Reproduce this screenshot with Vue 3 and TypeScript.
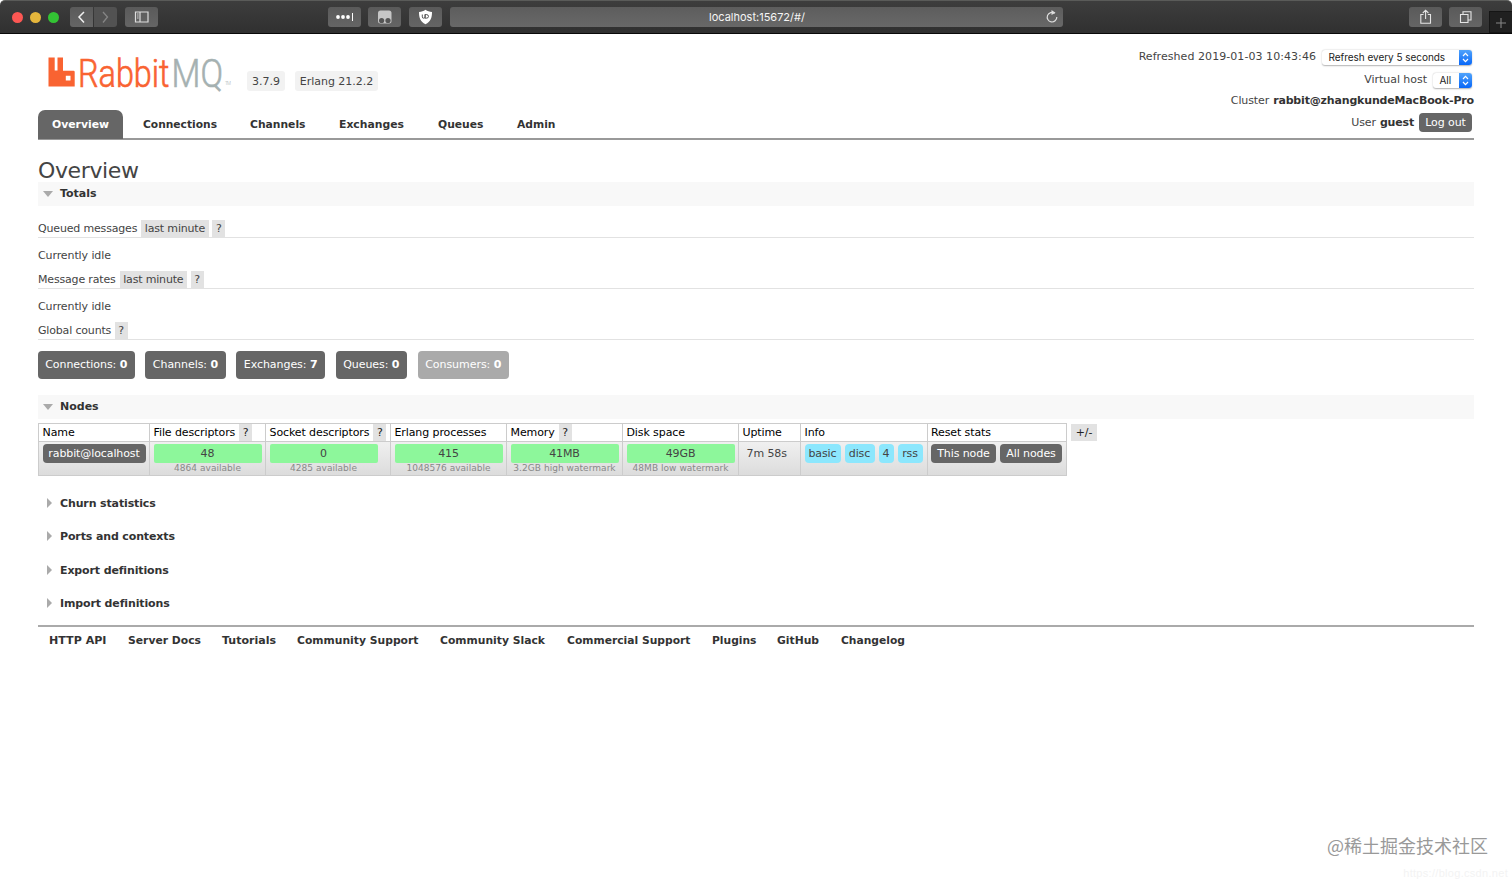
<script setup lang="ts">
interface Tab { label: string; width: number; active?: boolean }
interface Count { label: string; value: number; width: number; disabled?: boolean }
interface Stat { title: string; help?: boolean; value: string; note: string; bar: number }

const tabs: Tab[] = [
  { label: 'Overview', width: 57, active: true },
  { label: 'Connections', width: 74 },
  { label: 'Channels', width: 55.5 },
  { label: 'Exchanges', width: 65 },
  { label: 'Queues', width: 45.5 },
  { label: 'Admin', width: 38.5 },
]

const counts: Count[] = [
  { label: 'Connections', value: 0, width: 96.5 },
  { label: 'Channels', value: 0, width: 80.5 },
  { label: 'Exchanges', value: 7, width: 88.5 },
  { label: 'Queues', value: 0, width: 71.5 },
  { label: 'Consumers', value: 0, width: 91, disabled: true },
]

const stats: Stat[] = [
  { title: 'File descriptors', help: true, value: '48', note: '4864 available', bar: 108 },
  { title: 'Socket descriptors', help: true, value: '0', note: '4285 available', bar: 108 },
  { title: 'Erlang processes', value: '415', note: '1048576 available', bar: 108 },
  { title: 'Memory', help: true, value: '41MB', note: '3.2GB high watermark', bar: 108 },
  { title: 'Disk space', value: '49GB', note: '48MB low watermark', bar: 108 },
]

const columns: number[] = [111, 116, 125, 116, 116, 116, 62, 126.5, 139.5]
const sections: string[] = ['Churn statistics', 'Ports and contexts', 'Export definitions', 'Import definitions']
const links = [
  { label: 'HTTP API', width: 57.5 },
  { label: 'Server Docs', width: 73 },
  { label: 'Tutorials', width: 54 },
  { label: 'Community Support', width: 121.5 },
  { label: 'Community Slack', width: 105 },
  { label: 'Commercial Support', width: 123.5 },
  { label: 'Plugins', width: 44.5 },
  { label: 'GitHub', width: 42 },
  { label: 'Changelog', width: 64 },
]
</script>

<template>
  <div class="window">
    <div class="toolbar">
      <div class="lights"><i class="red"></i><i class="yellow"></i><i class="green"></i></div>
      <div class="history">
        <span class="tool back"><svg width="23" height="20" viewBox="0 0 23 20"><path d="M14 5 9 10l5 5.500" fill="none" stroke="#f0f0f0" stroke-width="1.500" /></svg></span>
        <span class="tool forward"><svg width="23" height="20" viewBox="0 0 23 20"><path d="m9 5 4.500 5L9 15.500" fill="none" stroke="#858585" stroke-width="1.300" /></svg></span>
      </div>
      <span class="tool sidebar"><svg width="33" height="20" viewBox="0 0 33 20"><g fill="none" stroke="#ddd" stroke-width="1.200"><path d="M10.500 5h12.500v10H10.500zM15 5v10" /><path d="M12 7h1.700M12 9h1.700M12 11h1.700" stroke-width=".9" /></g></svg></span>
      <span class="tool dots"><svg width="33" height="20" viewBox="0 0 33 20"><g fill="#fff"><circle cx="10" cy="10" r="1.900" /><circle cx="15" cy="10" r="1.900" /><circle cx="20" cy="10" r="1.900" /><path d="M24 6h1v8h-1z" /></g></svg></span>
      <span class="tool face"><svg width="33" height="20" viewBox="0 0 33 20"><rect x="10" y="3.500" width="13.500" height="13" rx="2.500" fill="#c6c6c6" /><circle cx="13.600" cy="13.500" r="2.600" fill="#555" /><circle cx="20" cy="13.500" r="2.600" fill="#555" /></svg></span>
      <span class="tool shield"><svg width="33" height="20" viewBox="0 0 33 20"><path d="M16.500 2.800c2 1.500 4 2 6.500 2.100 0 6-1.300 9.500-6.500 12.300C11.300 14.400 10 10.900 10 4.900c2.500-.1 4.500-.6 6.500-2.100z" fill="#fff" /><path d="M13.300 7.500v2.400q0 1.300 1.400 1.300t1.400-1.300V7.500v3.700h1.200q2.200 0 2.200-1.800t-2.200-1.900h-1.200" fill="none" stroke="#555" stroke-width="1" /></svg></span>
      <div class="address"><span>localhost:15672/#/</span><svg width="14" height="14" viewBox="0 0 14 14"><path d="M9.700 3.200A4.800 4.800 0 1 0 11.800 7" fill="none" stroke="#ddd" stroke-width="1.200" /><path d="M6.500 0v5L10.500 2.700z" fill="#ddd" /></svg></div>
      <span class="tool share"><svg width="33" height="20" viewBox="0 0 33 20"><path d="M14.500 7.500h-2.700v8.700h9.700V7.500h-2.700M16.600 12V3.500M13.800 6l2.800-2.800L19.400 6" fill="none" stroke="#e5e5e5" stroke-width="1.100" /></svg></span>
      <span class="tool tiles"><svg width="33" height="20" viewBox="0 0 33 20"><path d="M11.500 7.500h7.500v8h-7.500zM14 7.500v-2.700h8V13h-3" fill="none" stroke="#e5e5e5" stroke-width="1.100" /></svg></span>
      <span class="newtab"><svg width="22" height="22" viewBox="0 0 22 22"><path d="M11 6v10M6 11h10" stroke="#858585" stroke-width="1.100" /></svg></span>
    </div>

    <div class="page">
      <header class="header">
        <div class="left">
          <div class="brand">
            <svg class="logo" width="194" height="52" viewBox="0 -8 194 52">
              <path d="M10.500 7.500h6.200v13h2.800v-13h5.500v13.200h10.500q1.200 0 1.200 1.200v14.700H10.500zM27.800 25.800v4.700h4.700v-4.700z" fill="#f96331" fill-rule="evenodd" />
              <text x="40" y="36.500" font-size="39.500" textLength="91.500" lengthAdjust="spacingAndGlyphs" fill="#f96331" stroke="#f96331" stroke-width=".7">Rabbit</text>
              <text x="133.500" y="36.500" font-size="39.500" textLength="51.500" lengthAdjust="spacingAndGlyphs" fill="#a5b1b1" stroke="#a5b1b1" stroke-width=".6">MQ</text>
              <text x="187" y="35" font-size="4.500" textLength="6" fill="#a5b1b1">TM</text>
            </svg>
            <span class="version v1">3.7.9</span>
            <span class="version v2">Erlang 21.2.2</span>
          </div>
          <nav class="tabs">
            <a v-for="t in tabs" :key="t.label" :class="{ active: t.active }"><svg :width="t.width" height="16"><text x="0" y="12" :textLength="t.width" lengthAdjust="spacingAndGlyphs">{{ t.label }}</text></svg></a>
          </nav>
        </div>
        <div class="status">
          <div class="refresh"><span class="stamp">Refreshed 2019-01-03 10:43:46</span><span class="select wide">Refresh every 5 seconds<i><svg width="13" height="15" viewBox="0 0 13 15"><path d="m4 6 2.500-2.600L9 6M4 9l2.500 2.600L9 9" fill="none" stroke="#fff" stroke-width="1.200" /></svg></i></span></div>
          <div class="vhost"><span>Virtual host</span><span class="select small">All<i><svg width="13" height="15" viewBox="0 0 13 15"><path d="m4 6 2.500-2.600L9 6M4 9l2.500 2.600L9 9" fill="none" stroke="#fff" stroke-width="1.200" /></svg></i></span></div>
          <div class="cluster">Cluster <b>rabbit@zhangkundeMacBook-Pro</b></div>
          <div class="user">User <b>guest</b><span class="button">Log out</span></div>
        </div>
      </header>

      <h1>Overview</h1>
      <h2 class="open"><i class="down"></i>Totals</h2>
      <div class="totals">
        <h3>Queued messages <span class="tag range">last minute</span><span class="tag help">?</span></h3>
        <p>Currently idle</p>
        <h3>Message rates <span class="tag range">last minute</span><span class="tag help">?</span></h3>
        <p>Currently idle</p>
        <h3>Global counts <span class="tag help">?</span></h3>
      </div>
      <div class="counts">
        <span v-for="c in counts" :key="c.label" :class="{ disabled: c.disabled }" :style="{ width: c.width + 'px' }">{{ c.label }}: <b>{{ c.value }}</b></span>
      </div>

      <h2 class="open"><i class="down"></i>Nodes</h2>
      <div class="nodes">
        <table>
          <colgroup><col v-for="(w, i) in columns" :key="i" :style="{ width: w + 'px' }"></colgroup>
          <thead>
            <tr>
              <th><div class="title">Name</div></th>
              <th v-for="s in stats" :key="s.title"><div class="title">{{ s.title }}<span v-if="s.help" class="tag mark">?</span></div></th>
              <th><div class="title">Uptime</div></th><th><div class="title">Info</div></th><th><div class="title">Reset stats</div></th>
            </tr>
          </thead>
          <tbody>
            <tr>
              <td><span class="button node">rabbit@localhost</span></td>
              <td v-for="s in stats" :key="s.title"><div class="stat" :style="{ width: s.bar + 'px' }"><div class="bar">{{ s.value }}</div><small>{{ s.note }}</small></div></td>
              <td><span class="uptime">7m 58s</span></td>
              <td><div class="group"><span class="info i1">basic</span><span class="info i2">disc</span><span class="info i3">4</span><span class="info i4">rss</span></div></td>
              <td><div class="group"><span class="button r1">This node</span><span class="button r2">All nodes</span></div></td>
            </tr>
          </tbody>
        </table>
        <span class="tag plus">+/-</span>
      </div>

      <div class="sections">
        <h2 v-for="s in sections" :key="s"><i class="right"></i>{{ s }}</h2>
      </div>
      <footer>
        <a v-for="l in links" :key="l.label"><svg :width="l.width" height="16"><text x="0" y="12" :textLength="l.width" lengthAdjust="spacingAndGlyphs">{{ l.label }}</text></svg></a>
      </footer>
    </div>
    <div class="watermark">@稀土掘金技术社区</div>
    <div class="source">https://blog.csdn.net</div>
  </div>
</template>

<style>
html, body { margin: 0; background: #fff; }
</style>

<style scoped>
* { box-sizing: border-box; }
i { font-style: normal; }
.window { position: relative; width: 1512px; height: 881px; overflow: hidden; background: #fff; color: #444; font: 11px/16px Verdana, "DejaVu Sans", sans-serif; letter-spacing: -.1px; white-space: nowrap; }
.toolbar { display: flex; align-items: flex-start; height: 34px; padding-top: 6px; background: linear-gradient(#3d3d3d, #303030); border-top: 1px solid #5a5b59; border-bottom: 1px solid #090909; border-radius: 5px 5px 0 0; }
.lights { display: flex; gap: 7px; margin: 4.500px 12px 0 11.500px; }
.lights i { width: 11px; height: 11px; border-radius: 50%; }
.red { background: #fc5753; } .yellow { background: #e5b63c; } .green { background: #33c334; }
.history { display: flex; gap: 1px; margin: 0 8px 0 -1px; }
.tool { display: block; width: 33px; height: 20px; border-radius: 3px; background: linear-gradient(#5a5a5a, #656565); flex: none; }
.tool svg { display: block; }
.history .tool { width: 23px; }
.history .forward { background: #525252; border-radius: 0 3px 3px 0; }
.history .back { border-radius: 3px 0 0 3px; }
.dots { margin-left: 170px; } .face { margin-left: 7.500px; } .shield { margin-left: 8px; }
.address { display: flex; align-items: center; justify-content: center; width: 613px; height: 20px; margin-left: 7.500px; border-radius: 3px; background: linear-gradient(#5d5d5d, #686868); color: #f5f5f5; font: 11px/20px Inter, sans-serif; letter-spacing: 0; flex: none; }
.address span { flex: 1; text-align: center; padding: 0 0 0 20px; }
.address svg { margin-right: 4px; }
.share { margin-left: 346px; } .tiles { margin-left: 7.500px; }
.newtab { width: 24px; height: 22px; margin: 4px 0 0 7px; background: #202020; border: 1px solid #151515; border-right: 0; flex: none; }
.newtab svg { display: block; }

.page { padding: 0 38px; }
.header { display: flex; justify-content: space-between; height: 105.500px; border-bottom: 2px solid #999; }
.brand { display: flex; height: 76px; padding-top: 16px; }
.logo { display: block; margin-top: -8px; overflow: visible; font-family: Roboto, sans-serif; font-weight: 300; letter-spacing: 0; }
.version { height: 20px; margin-top: 21px; border-radius: 3px; background: #f2f2f2; text-align: center; line-height: 21px; }
.v1 { width: 38px; margin-left: 15px; letter-spacing: .05px; } .v2 { width: 83px; margin-left: 10px; letter-spacing: -.02px; }
.tabs { display: flex; gap: 5.550px; }
.tabs a { height: 28.500px; padding: 5.500px 14px 0; border-radius: 7px 7px 0 0; }
.tabs svg, footer svg { display: block; overflow: visible; fill: #333; font-weight: 700; letter-spacing: 0; }
.tabs .active { background: #666; }
.tabs .active svg { fill: #fff; }
.status { display: flex; flex-direction: column; align-items: flex-end; padding-top: 14px; }
.status > div { display: flex; align-items: center; }
.refresh { height: 18px; padding-right: 2px; }
.stamp { letter-spacing: .06px; }
.vhost { height: 18px; margin-top: 5px; padding-right: 2px; letter-spacing: -.03px; }
.select { display: flex; justify-content: space-between; height: 15px; padding-left: 6.500px; border-radius: 3px; background: #fff; box-shadow: 0 .5px 1.500px rgb(0 0 0 / .3); color: #222; font: 10px/14px Inter, sans-serif; letter-spacing: -.04px; margin-left: 6px; }
.select i { width: 13px; height: 15px; border-radius: 0 3px 3px 0; background: linear-gradient(#50a3fb, #0867f8); }
.select svg { display: block; }
.wide { width: 150px; } .small { width: 39px; }
.cluster { height: 16px; margin-top: 4px; }
.status b { color: #333; margin-left: 4px; letter-spacing: -.17px; }
.user { height: 20px; margin-top: 3.500px; padding-right: 2px; line-height: 18px; }
.user .button { margin-left: 5px; width: 53px; }
.button { display: block; height: 19px; border-radius: 4px; background: #666; color: #fff; text-align: center; line-height: 19px; }

h1 { margin: 18px 0 0; height: 24.500px; font-size: 22px; line-height: 26px; font-weight: 400; letter-spacing: -.38px; }
h2 { display: flex; align-items: center; height: 24px; margin: 0; font-size: 11px; color: #333; letter-spacing: -.13px; }
.open { background: #f8f8f8; letter-spacing: 0; }
.down { width: 0; height: 0; margin: 0 7px 0 5px; border: 5px solid transparent; border-top: 6px solid #aaa; border-bottom: 0; }
.right { width: 0; height: 0; margin: -2px 8.500px 0 8.500px; border: 5px solid transparent; border-left: 5.500px solid #aaa; border-right: 0; }
.totals { padding-top: 12px; }
h3 { display: flex; align-items: flex-end; height: 19.500px; margin: 0; border-bottom: 1px solid #e2e2e2; font-size: 11px; line-height: 17px; font-weight: 400; letter-spacing: -.17px; }
p { margin: 0; height: 31.800px; padding-top: 10px; }
.tag { display: block; height: 17px; background: #e2e2e2; text-align: center; line-height: 17px; }
.range { width: 67.500px; margin-left: 4px; } .help { width: 13px; margin-left: 3.500px; }
.counts { display: flex; gap: 10.700px; margin: 11px 0 15.800px; }
.counts span { height: 28px; border-radius: 4px; background: #666; color: #fff; text-align: center; line-height: 28px; letter-spacing: -.05px; }
.counts .disabled { background: #aaa; }

.nodes { display: flex; margin-top: 4px; height: 53px; }
table { table-layout: fixed; width: 1029px; border-collapse: separate; border-spacing: 0; border: solid #ccc; border-width: 1px 0 0 1px; height: 53px; }
th, td { padding: 0 0 0 3.500px; border-right: 1px solid #ccc; border-bottom: 1px solid #ccc; text-align: left; font-weight: 400; vertical-align: top; }
.title { display: flex; height: 17px; color: #000; line-height: 18px; }
td { height: 34px; padding-top: 2px; background: linear-gradient(#f0f0f0, #dcdcdc); }
.mark { width: 13px; height: 17px; margin-left: 4px; color: #222; }
.node { width: 103px; }
.stat { text-align: center; }
.bar { height: 19px; border-radius: 2px; background: #8df79b; line-height: 19px; }
small { display: flex; justify-content: center; height: 12px; font-size: 9px; line-height: 11px; color: #888; letter-spacing: .04px; }
.uptime { display: block; padding: 2px 0 0 4px; }
.group { display: flex; gap: 4px; }
.info { height: 19px; border-radius: 4px; background: #8ce7fd; text-align: center; line-height: 19px; }
.i1 { width: 36px; } .i2 { width: 30px; } .i3 { width: 15px; } .i4 { width: 25px; }
.r1 { width: 65px; } .r2 { width: 62px; }
.plus { width: 26px; margin: 1px 0 0 4px; color: #222; }
.sections { display: flex; flex-direction: column; gap: 9.300px; padding-top: 16.200px; height: 149.500px; }
.sections h2 { width: 300px; flex: none; }
footer { display: flex; gap: 21.400px; padding: 5px 10.700px; border-top: 2px solid #aaa; }
.watermark { position: absolute; right: 24px; bottom: 23px; color: #999; font: 18px/26px "Noto Sans CJK SC", sans-serif; letter-spacing: 0; }
.source { position: absolute; right: 4px; bottom: 0; color: #f3f3f3; font: 11px/16px "Liberation Sans", sans-serif; letter-spacing: .3px; }
</style>
